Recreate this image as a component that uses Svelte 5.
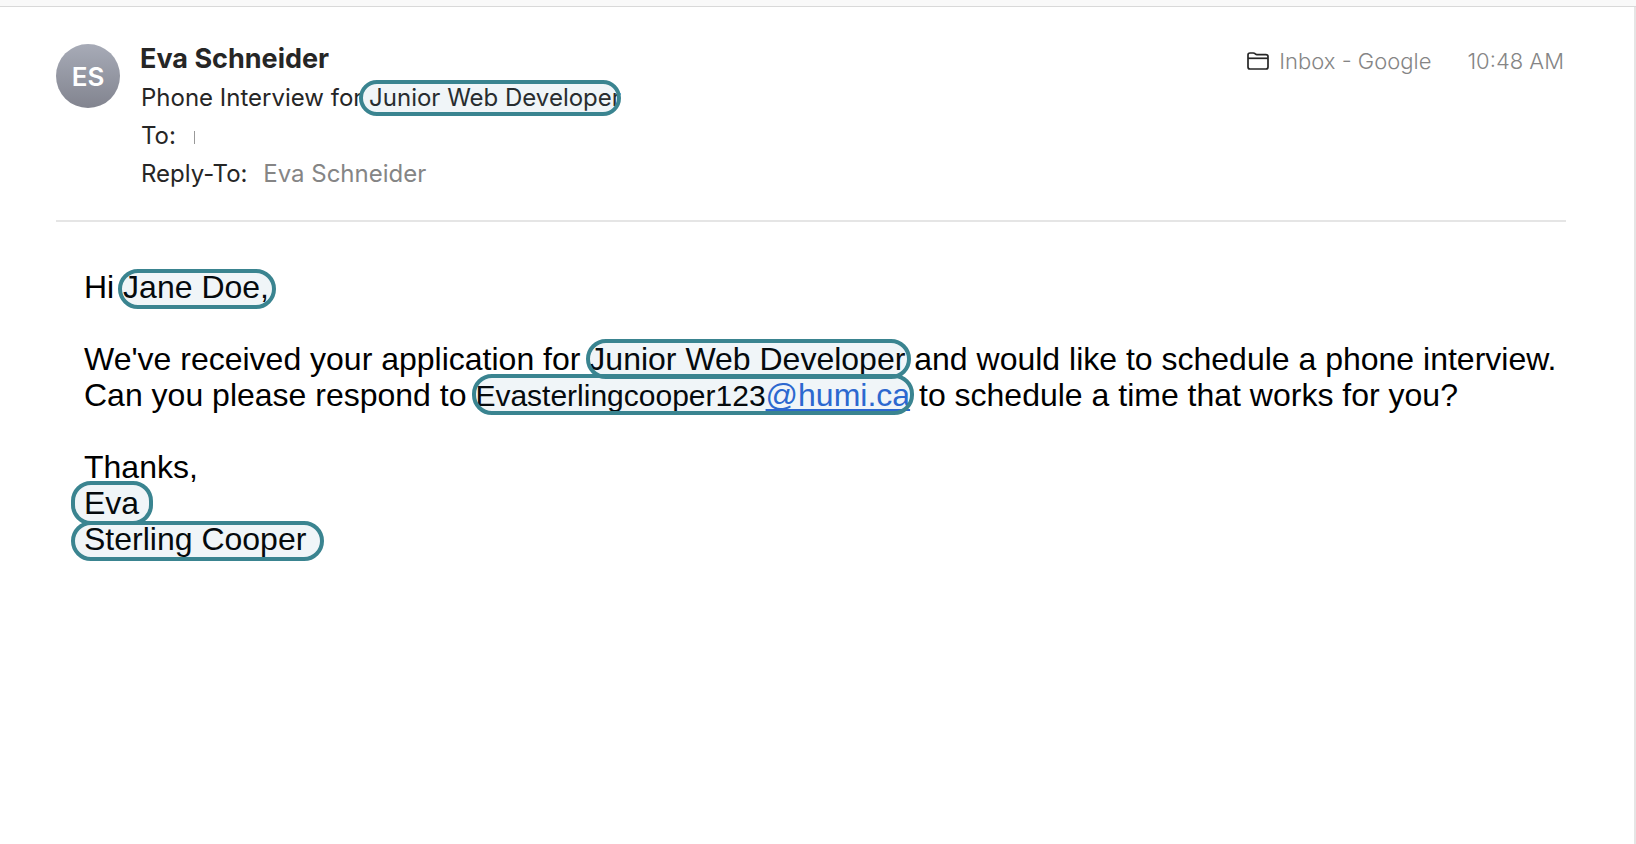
<script>
  const message = {
    initials: 'ES',
    from: 'Eva Schneider',
    replyTo: 'Eva Schneider',
    mailbox: 'Inbox - Google',
    time: '10:48 AM',
    role: 'Junior Web Developer',
    recipient: 'Jane Doe,',
    mailUser: 'Evasterlingcooper123',
    mailHost: '@humi.ca',
    signature: 'Eva',
    company: 'Sterling Cooper'
  };
</script>

<div class="window">
  <div class="toolbar-edge"></div>
  <article class="message">
    <header>
      <div class="avatar">{message.initials}</div>
      <div class="details">
        <h1>{message.from}</h1>
        <p>Phone Interview for <span class="mark subject">{message.role}</span></p>
        <p>To: <span class="caret"></span></p>
        <p>Reply-To: <span class="muted reply">{message.replyTo}</span></p>
      </div>
      <div class="meta muted">
        <svg width="22" height="18" viewBox="0 0 22 18" fill="none" stroke="#262626" stroke-width="1.7" stroke-linejoin="round">
          <path d="M1 15V3Q1 1 3 1H6.3Q7.3 1 8 1.7L8.6 2.2Q9 2.6 10 2.6H18.8Q21 2.6 21 4.6V15Q21 17 19 17H3Q1 17 1 15Z" />
          <path d="M1 6.3H21" />
        </svg>
        <span>{message.mailbox}</span>
        <time>{message.time}</time>
      </div>
    </header>

    <div class="body">
      <p>Hi <span class="mark name">{message.recipient}</span></p>
      <p>
        We've received your application for <span class="mark">{message.role}</span> and would like to schedule a phone interview.<br />
        Can you please respond to <span class="mark email"><span class="user">{message.mailUser}</span><a href="mailto:{message.mailUser}{message.mailHost}">{message.mailHost}</a></span> to schedule a time that works for you?
      </p>
      <p>
        Thanks,<br />
        <span class="mark sign">{message.signature}</span><br />
        <span class="mark sign company">{message.company}</span>
      </p>
    </div>
  </article>
</div>

<style>
  :global(body) {
    margin: 0;
    background: #fff;
  }

  .window {
    display: flex;
    flex-direction: column;
    min-height: 100vh;
  }

  .toolbar-edge {
    height: 6px;
    background: #f9f9f9;
    border-bottom: 1px solid #d9d9d9;
  }

  .message {
    flex: 1;
    padding: 37px 68px 40px 56px;
    border-right: 2px solid #e5e5e5;
  }

  header {
    display: flex;
    align-items: flex-start;
    padding-bottom: 27px;
    border-bottom: 2px solid #e5e5e5;
    font-family: Inter, sans-serif;
    font-size: 24px;
    line-height: 38px;
    color: #262626;
  }

  .avatar {
    width: 64px;
    height: 64px;
    border-radius: 50%;
    background: linear-gradient(#a7abb7, #82848f);
    color: #fff;
    font-size: 26px;
    font-weight: 600;
    line-height: 66px;
    text-align: center;
  }

  .details {
    flex: 1;
    margin-left: 20px;
  }

  h1 {
    margin: 0 0 5px;
    font-size: 27px;
    font-weight: 700;
    line-height: 30px;
  }

  p {
    margin: 0;
  }

  .details p {
    padding-left: 1px;
  }

  .muted {
    color: #858585;
  }

  .caret {
    display: inline-block;
    width: 1px;
    height: 13px;
    margin-left: 11px;
    background: #999;
  }

  .reply {
    margin-left: 9px;
  }

  .meta {
    display: flex;
    align-items: center;
    padding-right: 2px;
    font-size: 22px;
    font-weight: 300;
    line-height: 34px;
  }

  .meta svg {
    margin-right: 10px;
  }

  time {
    margin-left: 36px;
  }

  .body {
    padding: 47px 0 0 28px;
    font-family: "Liberation Sans", Arial, sans-serif;
    font-size: 32px;
    line-height: 36px;
    color: #000;
  }

  .body p + p {
    margin-top: 36px;
  }

  /* highlight pill drawn over the text */
  .mark {
    --top: -2px;
    --right: -6px;
    --bottom: -2px;
    --left: -3px;
    position: relative;
    white-space: nowrap;
  }

  .mark::after {
    content: "";
    position: absolute;
    top: var(--top);
    right: var(--right);
    bottom: var(--bottom);
    left: var(--left);
    box-sizing: border-box;
    border: 4px solid #3a8490;
    border-radius: 20px;
    background: rgba(58, 132, 160, 0.08);
    pointer-events: none;
  }

  .subject {
    --top: -3px;
    --right: 0px;
    --bottom: -4px;
    --left: -10px;
  }

  .name {
    --right: -7px;
    --left: -5px;
    --top: 0px;
    --bottom: -4px;
  }

  .email {
    --top: -3px;
    --right: -4px;
  }

  .sign {
    --top: -4px;
    --right: -14px;
    --bottom: -4px;
    --left: -13px;
  }

  .company {
    --top: 0px;
    --right: -18px;
  }

  .user {
    font-size: 30px;
    line-height: 32px;
  }

  a {
    color: #2b66d3;
    text-decoration-thickness: 2px;
    text-decoration-skip-ink: none;
    text-underline-offset: 3px;
  }
</style>
